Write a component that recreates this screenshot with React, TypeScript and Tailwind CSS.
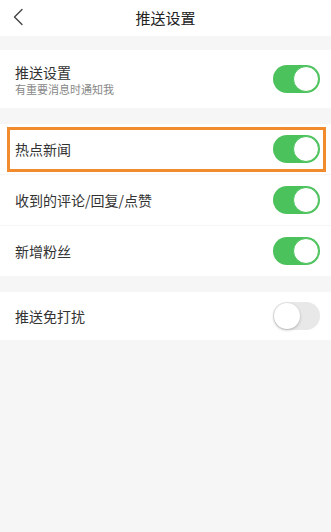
import React from "react";

function Toggle({ on }: { on: boolean }) {
  if (on) {
    return (
      <div className="flex h-[28px] w-[47px] shrink-0 items-center justify-end rounded-full bg-[#4cc25c] p-[1px]">
        <div className="h-[26px] w-[26px] rounded-full border border-[#4cc25c] bg-white" />
      </div>
    );
  }
  return (
    <div className="flex h-[28px] w-[47px] shrink-0 items-center justify-start rounded-full bg-[#e8e8e8] p-[1px]">
      <div className="h-[26px] w-[26px] rounded-full bg-white shadow-[0_1px_3px_rgba(0,0,0,0.25)]" />
    </div>
  );
}

function Row({ title, on, highlight }: { title: string; on: boolean; highlight?: boolean }) {
  return (
    <div className="relative flex h-[50px] items-center justify-between bg-white pl-[15px] pr-[11px]">
      <span className="text-[14px] text-[#333]">{title}</span>
      <Toggle on={on} />
      {highlight && (
        <div className="pointer-events-none absolute left-[7px] right-[5px] top-[3px] bottom-[2px] border-[3px] border-[#f28a2e]" />
      )}
    </div>
  );
}

export default function App() {
  return (
    <div
      className="min-h-[532px] w-[331px] bg-[#f6f6f6]"
      style={{ fontFamily: '"Noto Sans CJK SC", "Noto Sans", sans-serif' }}
    >
      <div className="relative flex h-[36px] items-center justify-center bg-white">
        <svg className="absolute left-[12px] top-[8px]" width="12" height="18" viewBox="0 0 12 18" fill="none">
          <path d="M10 1.5 L2.5 9 L10 16.5" stroke="#444" strokeWidth="1.4" strokeLinecap="round" strokeLinejoin="round" />
        </svg>
        <span className="text-[15px] text-[#222]">推送设置</span>
      </div>

      <div className="h-[14px]" />

      <div className="flex h-[58px] items-center justify-between bg-white pl-[15px] pr-[11px]">
        <div className="flex flex-col">
          <span className="text-[14px] leading-[20px] text-[#333]">推送设置</span>
          <span className="text-[11px] leading-[15px] text-[#888]">有重要消息时通知我</span>
        </div>
        <Toggle on />
      </div>

      <div className="h-[16px]" />

      <div className="flex flex-col">
        <Row title="热点新闻" on highlight />
        <div className="h-px bg-[#f6f6f6]" />
        <Row title="收到的评论/回复/点赞" on />
        <div className="h-px bg-[#f6f6f6]" />
        <Row title="新增粉丝" on />
      </div>

      <div className="h-[16px]" />

      <div className="flex h-[48px] items-center justify-between bg-white pl-[15px] pr-[11px]">
        <span className="text-[14px] text-[#333]">推送免打扰</span>
        <Toggle on={false} />
      </div>
    </div>
  );
}
